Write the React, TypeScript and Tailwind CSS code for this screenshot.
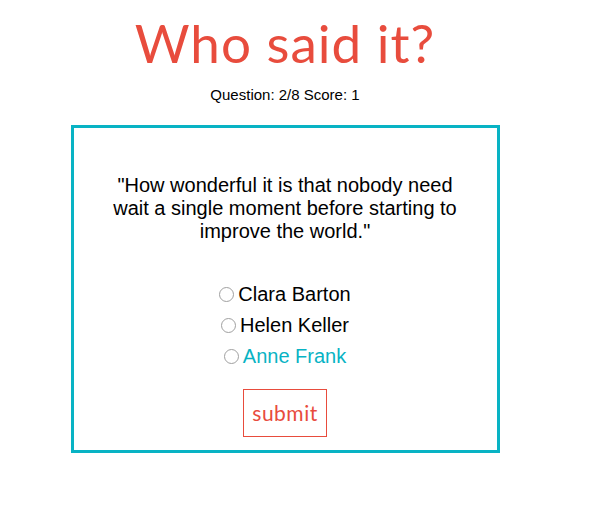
import React from 'react';

const options = ['Clara Barton', 'Helen Keller', 'Anne Frank'];

export default function App() {
  return (
    <main className="w-[570px] bg-white pt-[13px] text-black" style={{ fontFamily: '"Liberation Sans", Arial, sans-serif' }}>
      <h1 className="text-center text-[53px] leading-[60px] tracking-[1px] text-[#e84c3d] font-['Lato',sans-serif] font-normal">Who said it?</h1>
      <p className="mt-[13px] text-center text-[15px] leading-[18px]">Question: 2/8 Score: 1</p>

      <div className="mx-auto mt-[21px] flex w-[429px] flex-col items-center border-[3px] border-[#08b3c4] pt-[46px] pb-[13px]">
        <p className="w-[360px] text-center text-[20px] leading-[23px]">
          "How wonderful it is that nobody need wait a single moment before starting to improve the world."
        </p>

        <div className="mt-[40px] flex flex-col items-center gap-[8px]">
          {options.map((name, i) => (
            <label key={name} className={`flex items-center text-[20px] leading-[23px] ${i === 2 ? 'text-[#08b3c4]' : 'text-black'}`}>
              <span className="mr-[4px] inline-block h-[15px] w-[15px] rounded-full border border-[#a0a0a0] bg-white" />
              {name}
            </label>
          ))}
        </div>

        <button className="mt-[21px] h-[48px] w-[84px] border border-[#e84c3d] text-[21px] tracking-[0.5px] text-[#e84c3d] font-['Lato',sans-serif]">
          submit
        </button>
      </div>
    </main>
  );
}
